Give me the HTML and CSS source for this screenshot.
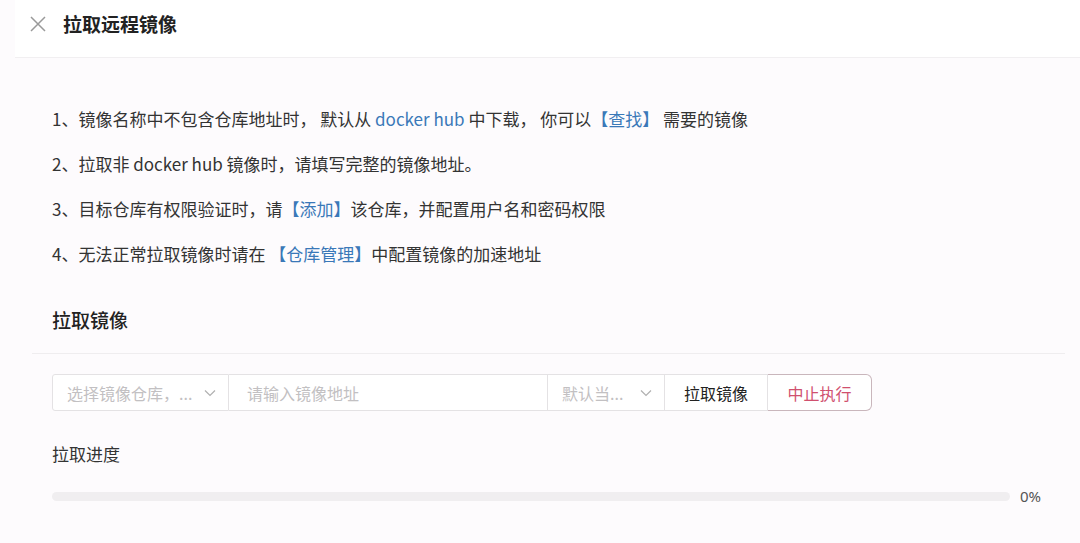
FILE: index.html
```html
<!DOCTYPE html>
<html>
<head>
<meta charset="utf-8">
<link rel="stylesheet" href="styles.css">
</head>
<body>
<div class="page">
  <header class="header">
    <svg class="close" width="16" height="16" viewBox="0 0 16 16"><path d="M1 1L15 15M15 1L1 15" stroke="#9a9a9a" stroke-width="1.5" fill="none"/></svg>
    <h1 class="title">拉取远程镜像</h1>
  </header>
  <main class="content">
    <ol class="tips">
      <li>1、镜像名称中不包含仓库地址时， 默认从 <span class="link">docker hub</span> 中下载， 你可以<span class="link">【查找】</span> 需要的镜像</li>
      <li>2、拉取非 docker hub 镜像时，请填写完整的镜像地址。</li>
      <li>3、目标仓库有权限验证时，请<span class="link">【添加】</span>该仓库，并配置用户名和密码权限</li>
      <li>4、无法正常拉取镜像时请在 <span class="link">【仓库管理】</span>中配置镜像的加速地址</li>
    </ol>
    <h2 class="section-title">拉取镜像</h2>
    <div class="divider"></div>
    <div class="form-row">
      <div class="field select repo"><span class="ph">选择镜像仓库，...</span><svg class="arrow" width="12" height="8" viewBox="0 0 12 8"><path d="M1 1.5L6 6.5L11 1.5" stroke="#b0b0b0" stroke-width="1.2" fill="none"/></svg></div>
      <div class="field input"><span class="ph">请输入镜像地址</span></div>
      <div class="field select tag"><span class="ph">默认当...</span><svg class="arrow" width="12" height="8" viewBox="0 0 12 8"><path d="M1 1.5L6 6.5L11 1.5" stroke="#b0b0b0" stroke-width="1.2" fill="none"/></svg></div>
      <div class="btn pull">拉取镜像</div>
      <div class="btn stop">中止执行</div>
    </div>
    <div class="progress-label">拉取进度</div>
    <div class="progress-row">
      <div class="track"><div class="bar" style="width:0%"></div></div>
      <span class="pct">0%</span>
    </div>
  </main>
</div>
</body>
</html>
```
FILE: styles.css
```css
html, body {
  margin: 0;
  padding: 0;
  background: #fdfbfd;
}
body {
  font-family: "Noto Sans CJK SC", "Noto Sans", sans-serif;
  color: #333;
  width: 1080px;
  height: 543px;
  overflow: hidden;
}
.page {
  width: 1080px;
}
.header {
  height: 58px;
  display: flex;
  align-items: center;
  margin-left: 15px;
  padding-left: 15px;
  padding-bottom: 9px;
  border-bottom: 1px solid #f1eff1;
  background: #fff;
  box-sizing: border-box;
}
.close {
  flex: none;
  margin-right: 17px;
}
.title {
  margin: 0;
  font-size: 19px;
  font-weight: 700;
  color: #222;
  line-height: 26px;
}
.content {
  padding: 0 15px 0 32px;
}
.tips {
  list-style: none;
  margin: 0;
  padding: 50px 0 0 20px;
}
.tips li {
  font-size: 17px;
  line-height: 22px;
  height: 45px;
  color: #333;
  white-space: nowrap;
}
.link {
  color: #3a78b8;
}
.section-title {
  margin: 0;
  padding: 19px 0 0 20px;
  font-size: 19px;
  font-weight: 500;
  line-height: 26px;
  color: #222;
}
.divider {
  height: 1px;
  background: #efedef;
  margin-top: 20px;
}
.form-row {
  display: flex;
  margin: 20px 0 0 20px;
  height: 37px;
}
.field, .btn {
  box-sizing: border-box;
  height: 37px;
  border: 1px solid #e4e2e4;
  display: flex;
  align-items: center;
  font-size: 16px;
  background: #fff;
}
.field + .field, .field + .btn, .btn + .btn {
  border-left: none;
}
.ph {
  color: #c2c0c2;
  white-space: nowrap;
}
.repo {
  width: 177px;
  padding: 0 12px 0 14px;
  justify-content: space-between;
  border-radius: 3px 0 0 3px;
}
.input {
  width: 319px;
  padding-left: 18px;
}
.tag {
  width: 117px;
  padding: 0 12px 0 14px;
  justify-content: space-between;
}
.arrow {
  flex: none;
}
.btn {
  justify-content: center;
  color: #222;
}
.pull {
  width: 103px;
}
.stop {
  width: 104px;
  color: #d0506e;
  border: 1px solid #c9b6bc;
  border-radius: 0 6px 6px 0;
}
.progress-label {
  margin: 31px 0 0 20px;
  font-size: 17px;
  line-height: 24px;
  color: #333;
}
.progress-row {
  display: flex;
  align-items: center;
  height: 20px;
  margin: 20px 0 0 20px;
}
.track {
  width: 958px;
  height: 9px;
  border-radius: 5px;
  background: #f0eef0;
}
.bar {
  height: 100%;
  background: #d0506e;
  border-radius: 5px;
}
.pct {
  margin-left: 10px;
  font-size: 15px;
  color: #555;
  font-family: "Noto Sans", sans-serif;
}
```
